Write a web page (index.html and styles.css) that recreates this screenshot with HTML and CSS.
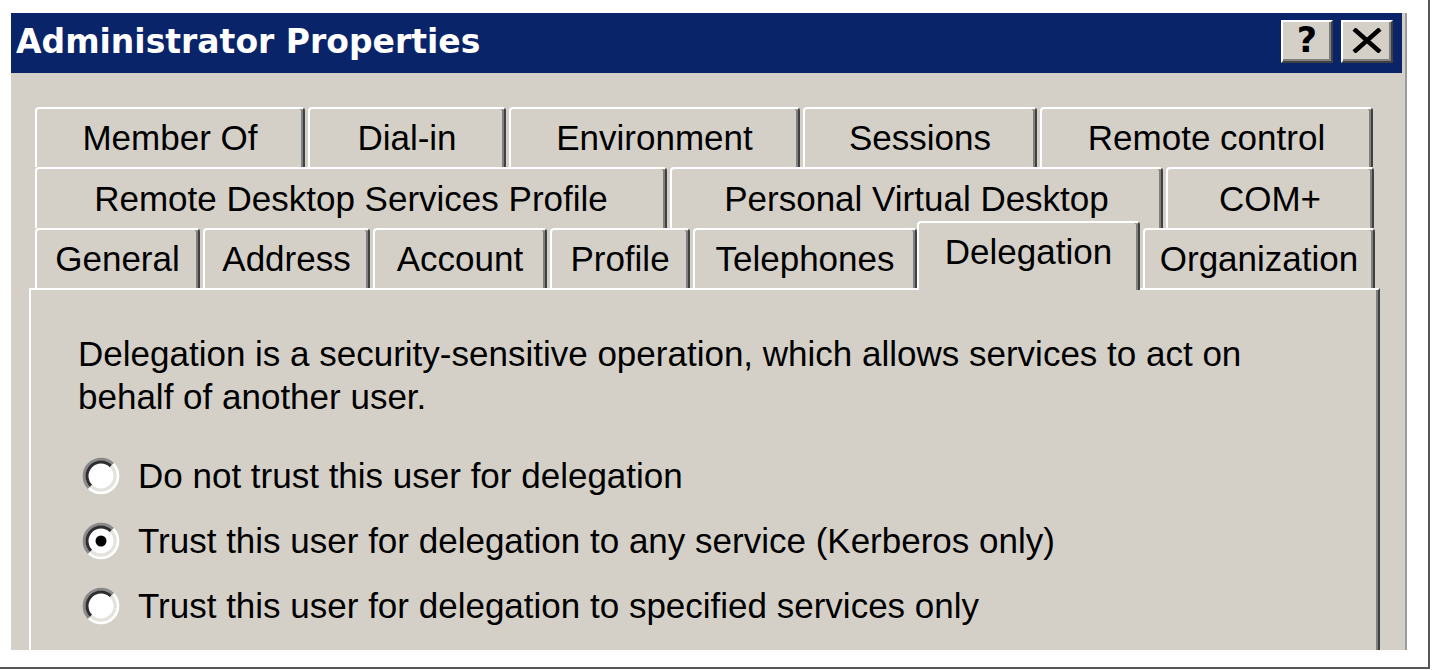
FILE: index.html
```html
<!DOCTYPE html>
<html>
<head>
<meta charset="utf-8">
<title>Administrator Properties</title>
<link rel="stylesheet" href="styles.css">
</head>
<body>
<div class="frame">
  <div class="dialog">
    <div class="titlebar">
      <span class="title">Administrator Properties</span>
      <div class="tbtns">
        <div class="capbtn"><span class="q">?</span></div>
        <div class="capbtn">
          <svg class="xicon" width="30" height="25" viewBox="0 0 30 25"><path d="M2 1 L28 24 M28 1 L2 24" stroke="#000" stroke-width="4.5" fill="none"/></svg>
        </div>
      </div>
    </div>
    <div class="body">
      <div class="tabs">
        <div class="row r1">
          <div class="tab w-member">Member Of</div>
          <div class="tab w-dialin">Dial-in</div>
          <div class="tab w-env">Environment</div>
          <div class="tab w-sess">Sessions</div>
          <div class="tab w-rc">Remote control</div>
        </div>
        <div class="row r2">
          <div class="tab w-rds">Remote Desktop Services Profile</div>
          <div class="tab w-pvd">Personal Virtual Desktop</div>
          <div class="tab w-com">COM+</div>
        </div>
        <div class="row r3">
          <div class="tab w-gen">General</div>
          <div class="tab w-addr">Address</div>
          <div class="tab w-acct">Account</div>
          <div class="tab w-prof">Profile</div>
          <div class="tab w-tel">Telephones</div>
          <div class="tab sel w-deleg">Delegation</div>
          <div class="tab w-org">Organization</div>
        </div>
      </div>
      <div class="panel">
        <p class="desc">Delegation is a security-sensitive operation, which allows services to act on behalf of another user.</p>
        <div class="options">
          <div class="opt">
            <svg class="radio" width="38" height="38" viewBox="0 0 38 38">
              <circle cx="19" cy="19" r="15" fill="#fff"/>
              <path d="M31.02 6.98 A17 17 0 0 0 6.98 31.02" stroke="#8a8a8a" stroke-width="3" fill="none"/>
              <path d="M6.98 31.02 A17 17 0 0 0 31.02 6.98" stroke="#ffffff" stroke-width="3" fill="none"/>
              <path d="M28.9 9.1 A14 14 0 0 0 9.1 28.9" stroke="#2e2e2e" stroke-width="3" fill="none"/>
              <path d="M9.1 28.9 A14 14 0 0 0 28.9 9.1" stroke="#e4e2dd" stroke-width="3" fill="none"/>
            </svg>
            <span>Do not trust this user for delegation</span>
          </div>
          <div class="opt">
            <svg class="radio" width="38" height="38" viewBox="0 0 38 38">
              <circle cx="19" cy="19" r="15" fill="#fff"/>
              <path d="M31.02 6.98 A17 17 0 0 0 6.98 31.02" stroke="#8a8a8a" stroke-width="3" fill="none"/>
              <path d="M6.98 31.02 A17 17 0 0 0 31.02 6.98" stroke="#ffffff" stroke-width="3" fill="none"/>
              <path d="M28.9 9.1 A14 14 0 0 0 9.1 28.9" stroke="#2e2e2e" stroke-width="3" fill="none"/>
              <path d="M9.1 28.9 A14 14 0 0 0 28.9 9.1" stroke="#e4e2dd" stroke-width="3" fill="none"/>
              <circle cx="19" cy="19" r="5.5" fill="#000"/>
            </svg>
            <span>Trust this user for delegation to any service (Kerberos only)</span>
          </div>
          <div class="opt">
            <svg class="radio" width="38" height="38" viewBox="0 0 38 38">
              <circle cx="19" cy="19" r="15" fill="#fff"/>
              <path d="M31.02 6.98 A17 17 0 0 0 6.98 31.02" stroke="#8a8a8a" stroke-width="3" fill="none"/>
              <path d="M6.98 31.02 A17 17 0 0 0 31.02 6.98" stroke="#ffffff" stroke-width="3" fill="none"/>
              <path d="M28.9 9.1 A14 14 0 0 0 9.1 28.9" stroke="#2e2e2e" stroke-width="3" fill="none"/>
              <path d="M9.1 28.9 A14 14 0 0 0 28.9 9.1" stroke="#e4e2dd" stroke-width="3" fill="none"/>
            </svg>
            <span>Trust this user for delegation to specified services only</span>
          </div>
        </div>
      </div>
    </div>
  </div>
</div>
</body>
</html>
```

FILE: styles.css
```css
html, body {
  margin: 0;
  padding: 0;
  background: #ffffff;
}

.frame {
  width: 1430px;
  height: 669px;
  box-sizing: border-box;
  padding: 13px 0 0 11px;
  background: #ffffff;
  border-right: 2px solid #575757;
  border-bottom: 2px solid #575757;
  overflow: hidden;
}

.dialog {
  width: 1396px;
  height: 637px;
  box-sizing: border-box;
  background: #d4d0c8;
  border-right: 2px solid #9c9c9c;
  padding-right: 3px;
  display: flex;
  flex-direction: column;
  font-family: "Liberation Sans", Arial, sans-serif;
  color: #000;
}

/* Title bar */
.titlebar {
  height: 60px;
  flex: none;
  background: #0a246a;
  display: flex;
  align-items: center;
  justify-content: space-between;
  padding: 0 9px 0 5px;
}

.title {
  font-family: "DejaVu Sans", Verdana, sans-serif;
  font-weight: bold;
  font-size: 33px;
  color: #ffffff;
  margin-top: -4px;
}

.tbtns {
  display: flex;
  gap: 8px;
  align-self: flex-start;
  margin-top: 7px;
}

.capbtn {
  width: 52px;
  height: 43px;
  box-sizing: border-box;
  background: #d4d0c8;
  border: 2px solid;
  border-color: #ffffff #404040 #404040 #ffffff;
  box-shadow: inset -2px -2px 0 #808080;
  display: flex;
  align-items: center;
  justify-content: center;
}

.q {
  font-family: "DejaVu Sans", Verdana, sans-serif;
  font-weight: bold;
  font-size: 35px;
  line-height: 1;
  margin-top: -2px;
}

.xicon {
  display: block;
  margin-top: -2px;
}

/* Tabs */
.body {
  flex: 1;
  display: flex;
  flex-direction: column;
  padding: 34px 22px 0 18px;
  min-height: 0;
}

.tabs {
  padding-left: 6px;
}

.row {
  display: flex;
  gap: 3px;
  height: 60px;
}

.row.r2 {
  height: 61px;
}

.tab {
  box-sizing: border-box;
  height: 100%;
  flex: none;
  background: #d4d0c8;
  border-top: 2px solid #ffffff;
  border-left: 2px solid #ffffff;
  border-right: 2px solid #404040;
  box-shadow: inset -2px 0 0 #808080;
  border-radius: 4px 4px 0 0;
  display: flex;
  align-items: center;
  justify-content: center;
  font-size: 35px;
  white-space: nowrap;
}

.tab.sel {
  position: relative;
  z-index: 2;
  height: 69px;
  margin-top: -7px;
  margin-left: -3px;
  padding-bottom: 10px;
}

.w-member { width: 270px; }
.w-dialin { width: 198px; }
.w-env { width: 291px; }
.w-sess { width: 234px; }
.w-rc { width: 333px; }

.w-rds { width: 632px; }
.w-pvd { width: 493px; }
.w-com { width: 208px; }

.w-gen { width: 165px; }
.w-addr { width: 167px; }
.w-acct { width: 174px; }
.w-prof { width: 140px; }
.w-tel { width: 224px; }
.w-deleg { width: 223px; }
.w-org { width: 232px; }

/* Panel */
.panel {
  flex: 1;
  box-sizing: border-box;
  border-top: 2px solid #ffffff;
  border-left: 2px solid #ffffff;
  border-right: 2px solid #404040;
  box-shadow: inset -2px 0 0 #808080;
  padding: 42px 0 0 47px;
}

.desc {
  margin: 0;
  width: 1210px;
  font-size: 35px;
  line-height: 43px;
}

.options {
  margin-top: 25px;
}

.opt {
  height: 65px;
  display: flex;
  align-items: center;
  font-size: 35px;
}

.radio {
  display: block;
  flex: none;
  margin-left: 4px;
  margin-right: 18px;
}
```
